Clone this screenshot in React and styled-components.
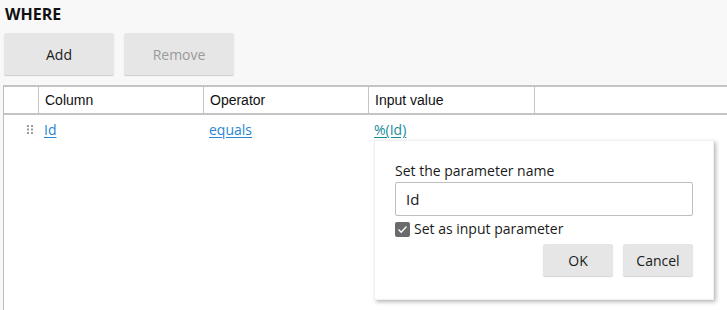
import styled, { createGlobalStyle } from 'styled-components';

const GlobalStyle = createGlobalStyle`
  html, body {
    margin: 0;
    padding: 0;
    background: #f8f8f8;
    font-family: 'Open Sans', 'Liberation Sans', sans-serif;
    color: #1a1a1a;
    overflow: hidden;
  }
`;

const Page = styled.div`
  display: flex;
  flex-direction: column;
  height: 100vh;
`;

const Heading = styled.div`
  font-size: 16px;
  font-weight: 700;
  line-height: 22px;
  padding: 3px 0 0 5px;
  height: 30px;
  box-sizing: border-box;
  color: #111;
`;

const Toolbar = styled.div`
  display: flex;
  gap: 10px;
  padding: 3px 0 0 4px;
`;

const Button = styled.button`
  width: ${(p) => p.width || 110}px;
  height: ${(p) => p.height || 42}px;
  border: none;
  border-radius: 2px;
  background: #e6e6e6;
  box-shadow: 0 1px 1px rgba(0, 0, 0, 0.18);
  font-family: 'Open Sans', sans-serif;
  font-size: 14px;
  color: ${(p) => (p.disabled ? '#9a9a9a' : '#1a1a1a')};
  padding: 0;
  cursor: ${(p) => (p.disabled ? 'default' : 'pointer')};
`;

const Table = styled.div`
  flex: 1;
  margin: 10px 0 0 3px;
  background: #fff;
  border-left: 1px solid #bdbdbd;
  border-top: 2px solid #c4c4c4;
`;

const HeaderRow = styled.div`
  display: grid;
  grid-template-columns: 35px 165px 165px 166px 1fr;
  height: 26px;
  border-bottom: 2px solid #c4c4c4;
`;

const HeaderCell = styled.div`
  display: flex;
  align-items: center;
  padding-left: 6px;
  font-family: 'Liberation Sans', Arial, sans-serif;
  font-size: 14px;
  color: #111;
  border-right: ${(p) => (p.last ? 'none' : '1px solid #c4c4c4')};
`;

const BodyRow = styled.div`
  display: grid;
  grid-template-columns: 35px 165px 165px 166px 1fr;
  height: 28px;
`;

const Cell = styled.div`
  position: relative;
  display: flex;
  align-items: center;
  padding-left: ${(p) => (p.handle ? 0 : 5)}px;
  justify-content: ${(p) => (p.handle ? 'flex-end' : 'flex-start')};
  padding-right: ${(p) => (p.handle ? 6 : 0)}px;
`;

const Link = styled.a`
  font-size: 14px;
  color: ${(p) => p.color || '#2a86d4'};
  text-decoration: underline;
  text-underline-offset: 2px;
  cursor: pointer;
`;

const Popup = styled.div`
  position: absolute;
  top: 25px;
  left: 5px;
  width: 340px;
  box-sizing: border-box;
  padding: 20px 20px 23px;
  background: #fff;
  border: 1px solid #f0f0f0;
  box-shadow: 2px 2px 4px rgba(0, 0, 0, 0.28);
  display: flex;
  flex-direction: column;
  z-index: 2;
`;

const Label = styled.div`
  font-size: 14px;
  line-height: 20px;
  margin-bottom: 1px;
  color: #1a1a1a;
`;

const Input = styled.input`
  height: 34px;
  box-sizing: border-box;
  border: 1px solid #bdbdbd;
  border-radius: 2px;
  padding: 0 10px;
  font-family: 'Open Sans', sans-serif;
  font-size: 15px;
  color: #1a1a1a;
  outline: none;
`;

const CheckRow = styled.label`
  display: flex;
  align-items: center;
  gap: 4px;
  margin-top: 5px;
  font-size: 14px;
  line-height: 16px;
`;

const CheckBox = styled.span`
  width: 15px;
  height: 15px;
  border-radius: 2px;
  background: #6b6b6b;
  display: flex;
  align-items: center;
  justify-content: center;
`;

const Actions = styled.div`
  display: flex;
  justify-content: flex-end;
  gap: 10px;
  margin-top: 7px;
`;

function DragHandle() {
  return (
    <svg width="6" height="9" viewBox="0 0 6 9">
      {[0, 1].map((c) =>
        [0, 1, 2].map((r) => (
          <rect key={`${c}${r}`} x={c * 4} y={r * 3.5} width="2" height="2" fill="#9a9a9a" />
        ))
      )}
    </svg>
  );
}

function ParameterPopup() {
  return (
    <Popup>
      <Label>Set the parameter name</Label>
      <Input defaultValue="Id" />
      <CheckRow>
        <CheckBox>
          <svg width="11" height="9" viewBox="0 0 11 9">
            <path d="M1.5 4.5 L4.2 7.2 L9.5 1.5" stroke="#fff" strokeWidth="1.3" fill="none" />
          </svg>
        </CheckBox>
        Set as input parameter
      </CheckRow>
      <Actions>
        <Button width={70} height={32}>OK</Button>
        <Button width={70} height={32}>Cancel</Button>
      </Actions>
    </Popup>
  );
}

export default function App() {
  return (
    <>
      <GlobalStyle />
      <Page>
        <Heading>WHERE</Heading>
        <Toolbar>
          <Button>Add</Button>
          <Button disabled>Remove</Button>
        </Toolbar>
        <Table>
          <HeaderRow>
            <HeaderCell />
            <HeaderCell>Column</HeaderCell>
            <HeaderCell>Operator</HeaderCell>
            <HeaderCell>Input value</HeaderCell>
            <HeaderCell last />
          </HeaderRow>
          <BodyRow>
            <Cell handle>
              <DragHandle />
            </Cell>
            <Cell>
              <Link>Id</Link>
            </Cell>
            <Cell>
              <Link>equals</Link>
            </Cell>
            <Cell>
              <Link color="#1b8c98">%(Id)</Link>
              <ParameterPopup />
            </Cell>
            <Cell />
          </BodyRow>
        </Table>
      </Page>
    </>
  );
}
